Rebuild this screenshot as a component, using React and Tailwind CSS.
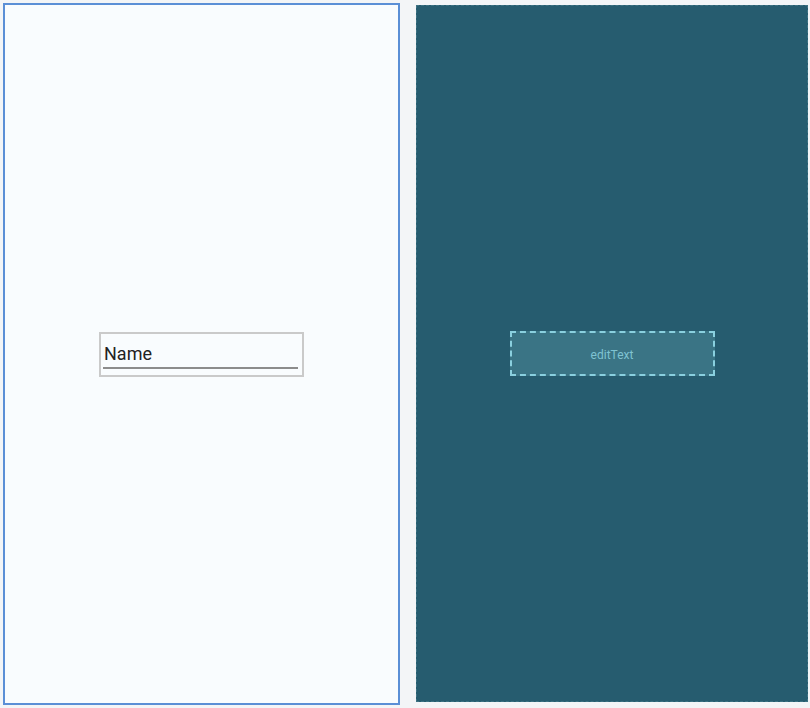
export default function App() {
  return (
    <div className="w-[810px] h-[708px] bg-[#f3f5f7] flex items-start font-['Roboto',sans-serif]">
      {/* design view */}
      <div className="ml-[3px] mt-[3px] w-[397px] h-[702px] border-2 border-[#5b8fd6] bg-[#f9fcfe] flex items-center justify-center">
        <div className="w-[205px] h-[45px] border-2 border-[#cacaca] px-[2px] pt-[9px] flex flex-col">
          <span className="text-[18px] leading-[22px] text-[#222] pl-[1px]">Name</span>
          <div className="mt-[2px] h-[2px] bg-[#8c8c8c] mr-[2px]" />
        </div>
      </div>

      {/* blueprint view */}
      <div className="ml-[16px] mt-[5px] w-[392px] h-[697px] bg-[#265c6f] border border-dashed border-[#3d7283] flex items-center justify-center">
        <div className="w-[205px] h-[45px] bg-[#3a7485] border-2 border-dashed border-[#8ad0df] flex items-center justify-center pt-[2px]">
          <span className="text-[12px] text-[#7fc3d2]">editText</span>
        </div>
      </div>
    </div>
  );
}
